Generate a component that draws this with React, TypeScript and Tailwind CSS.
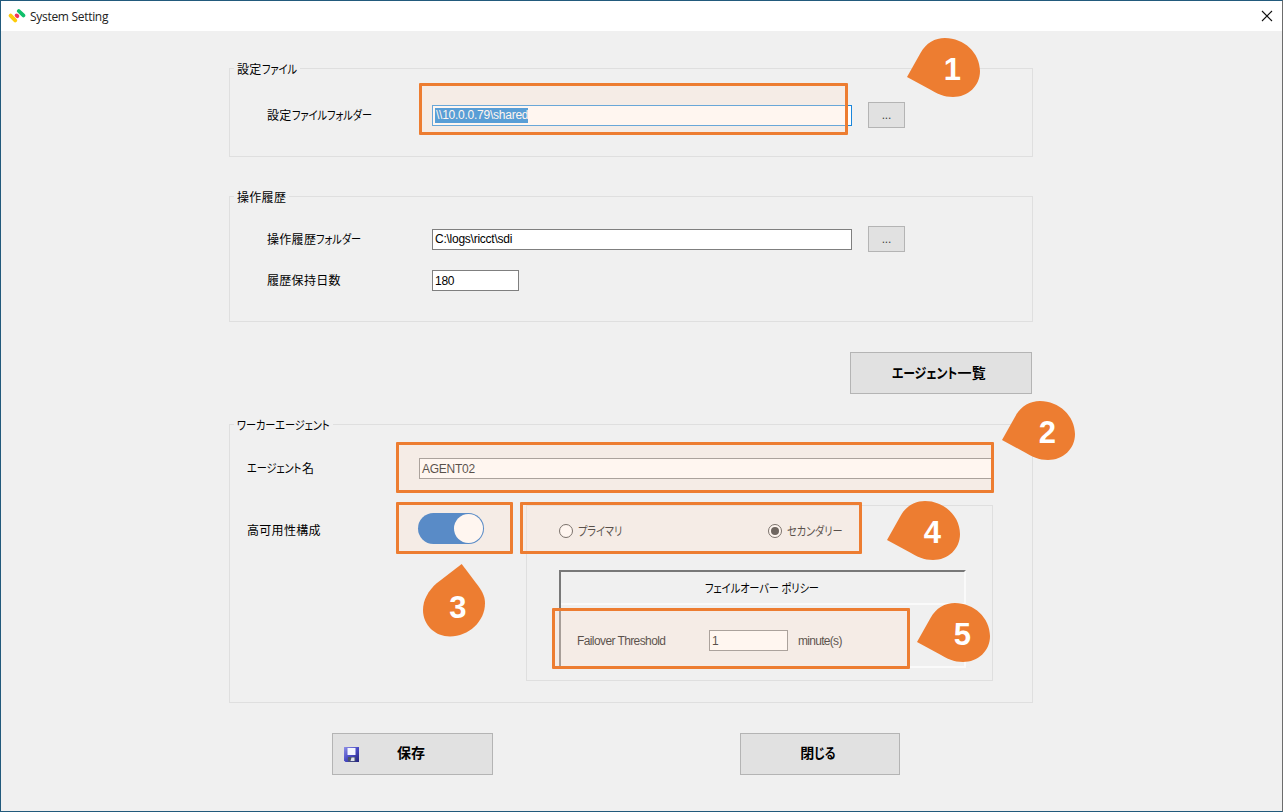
import type { ReactNode } from 'react';
import { clsx } from 'clsx';

function Logo() {
  return (
    <svg width="18" height="16" viewBox="0 0 18 16" fill="none" strokeWidth="3.8">
      <path d="M2.6 7.6 7.2 12.4" stroke="#fdcb09" strokeLinecap="round" />
      <path d="M10.8 3 15.4 7.4" stroke="#0fbf6b" strokeLinecap="round" />
      <path d="M8.6 7.4 9.4 8.2" stroke="#f0365a" strokeLinecap="round" />
    </svg>
  );
}

function FloppyIcon() {
  return (
    <svg width="15" height="15" viewBox="0 0 15 15">
      <defs>
        <linearGradient id="floppy" x1="0" y1="0" x2="1" y2="1">
          <stop offset="0" stopColor="#8f90e6" />
          <stop offset="0.5" stopColor="#4a4bc4" />
          <stop offset="1" stopColor="#23247c" />
        </linearGradient>
      </defs>
      <path d="M0 0h15v15H1.5L0 13.5Z" fill="url(#floppy)" />
      <rect x="3.5" y="1" width="8" height="7" fill="#f4f6ff" />
      <rect x="4" y="10" width="7.5" height="4.5" fill="#4b5568" />
      <path d="M7.5 10.5h3v3.5h-4Z" fill="#dfe4ee" />
    </svg>
  );
}

// condensed kana, as in MS UI Gothic
function Kana({ className = 'origin-left', children }: { className?: string; children: ReactNode }) {
  return <span className={clsx('inline-block scale-x-85 whitespace-nowrap tracking-[-0.1px]', className)}>{children}</span>;
}

function Group({ title, className, children }: { title?: ReactNode; className?: string; children: ReactNode }) {
  return (
    <section className={clsx('flex flex-col border border-[#dfdfdf]', className)}>
      {title && (
        <h2 className="-mt-[10px] ml-[4px] h-[20px] self-start bg-[#f0f0f0] pl-[3px] pr-[3px] leading-[22px]">{title}</h2>
      )}
      {children}
    </section>
  );
}

function TextBox({ className, focused, children }: { className?: string; focused?: boolean; children: ReactNode }) {
  return (
    <div
      className={clsx(
        'flex h-[21px] shrink-0 items-center border bg-white px-[2px] tracking-[-0.25px]',
        focused ? 'border-[#1a86db]' : 'border-[#7f7f7f]',
        className
      )}
    >
      {children}
    </div>
  );
}

function BrowseButton() {
  return (
    <button className="ml-4 h-[26px] w-[37px] shrink-0 border border-[#b4b4b4] bg-[#e1e1e1] text-[12px] leading-[24px] tracking-[-0.1px] text-[#444]">
      ...
    </button>
  );
}

function Radio({ checked }: { checked?: boolean }) {
  return (
    <span className="flex size-[14px] items-center justify-center rounded-full border border-[#333] bg-white">
      {checked && <span className="size-[8px] rounded-full bg-[#222]" />}
    </span>
  );
}

function Highlight({ className }: { className: string }) {
  return <div className={clsx('absolute rounded-[1px] border-3 border-[#ed7d31] bg-[#fee5d3]/35 bg-clip-padding', className)} />;
}

const sidePin =
  'M0 39 13.5 15C19 5 28 0 38 0C57 0 73 15 73 33C73 48 61 59 46 59C37 59 29.5 55.5 24 52Z';
const topPin =
  'M38.7 0 55.3 22C60.3 28.7 62 34 62 39.3C62 57.7 45.3 72.5 27 72.5C12 72.5 0 61 0 46C0 36 5.3 26.7 13.7 19.3Z';

function Pin({ n, up, className }: { n: number; up?: boolean; className: string }) {
  return (
    <svg width="73" height="73" viewBox="0 0 73 73" className={clsx('absolute', className)}>
      <path d={up ? topPin : sidePin} fill="#ed7d31" />
      <text
        x={up ? 35 : 45.5}
        y={up ? 54 : 41.5}
        textAnchor="middle"
        fill="#fff"
        className="font-['Liberation_Sans',sans-serif] text-[31px] font-bold"
      >
        {n}
      </text>
    </svg>
  );
}

export default function App() {
  return (
    <div className="relative flex h-[812px] w-[1283px] flex-col overflow-hidden border border-[#225a7c] border-r-[#6c6c6c] bg-[#f0f0f0] font-['Liberation_Sans','Noto_Sans_CJK_JP',sans-serif] text-[12px] tracking-[0.3px] text-black [font-feature-settings:'palt']">
      <header className="flex h-[30px] shrink-0 items-center bg-white pl-[7px] pr-[9px]">
        <Logo />
        <h1 className="ml-1 grow pt-px font-['Open_Sans',sans-serif] text-[12px] tracking-[-0.3px] text-[#222]">System Setting</h1>
        <svg width="12" height="12" viewBox="0 0 12 12" stroke="#111" strokeWidth="1.1">
          <path d="M1 1 11 11M11 1 1 11" />
        </svg>
      </header>

      <main className="ml-[228px] flex w-[804px] flex-col">
        <Group title={<>設定<Kana className="-mr-[6px] origin-left">ファイル</Kana></>} className="mt-[37px] h-[89px]">
          <div className="mt-[23px] flex items-center pl-[37px]">
            <span className="w-[165px] pt-px">設定<Kana>ファイルフォルダー</Kana></span>
            <TextBox focused className="w-[420px]">
              <span className="bg-[#0078d7] pl-px leading-[15px] text-white">\\10.0.0.79\shared</span>
            </TextBox>
            <BrowseButton />
          </div>
        </Group>

        <Group title="操作履歴" className="mt-[39px] h-[126px]">
          <div className="mt-[19px] flex items-center pl-[37px]">
            <span className="w-[165px] pt-px">操作履歴<Kana>フォルダー</Kana></span>
            <TextBox className="w-[420px]">C:\logs\ricct\sdi</TextBox>
            <BrowseButton />
          </div>
          <div className="mt-[18px] flex items-center pl-[37px]">
            <span className="w-[165px] pt-px">履歴保持日数</span>
            <TextBox className="w-[87px]">180</TextBox>
          </div>
        </Group>

        <button className="mr-px mt-[30px] h-[42px] w-[182px] self-end border border-[#b4b4b4] bg-[#e1e1e1] pr-1 text-[14px] font-bold">
          <Kana className="-mr-[11px] origin-left">エージェント</Kana>一覧
        </button>

        <Group title={<Kana className="-mr-[16px] origin-left">ワーカーエージェント</Kana>} className="mt-[30px] h-[279px]">
          <div className="mt-[23px] flex items-center pl-[17px]">
            <span className="w-[172px] pt-px"><Kana className="-mr-[9px] origin-left">エージェント</Kana>名</span>
            <TextBox className="w-[574px]">AGENT02</TextBox>
          </div>
          <div className="mt-[26px] flex pl-[17px]">
            <span className="mt-[17px] w-[171px]">高可用性構成</span>
            <div className="mt-[8px] flex h-[31px] w-[66px] items-center justify-end rounded-full bg-[#005bc0] pr-px">
              <span className="size-[29px] rounded-full bg-white" />
            </div>
            <Group className="ml-[42px] h-[176px] w-[467px]">
              <div className="mt-[15px] flex h-[20px] items-center pl-[32px]">
                <Radio />
                <span className="ml-[5px] w-[190px] pt-[2px]"><Kana>プライマリ</Kana></span>
                <Radio checked />
                <span className="ml-[5px] pt-[2px]"><Kana>セカンダリー</Kana></span>
              </div>
              <div className="ml-[32px] mt-[29px] flex h-[98px] w-[407px] flex-col border-2 border-b-[#fafafa] border-l-[#787878] border-r-[#fafafa] border-t-[#787878]">
                <div className="flex h-[33px] items-center justify-center border-b-2 border-[#fafafa] pr-[2px] pt-[3px]">
                  <Kana className="origin-center">フェイルオーバー ポリシー</Kana>
                </div>
                <div className="mt-[25px] flex items-center pl-[16px] tracking-[-0.6px]">
                  <span className="w-[132px]">Failover Threshold</span>
                  <TextBox className="w-[79px]">1</TextBox>
                  <span className="ml-[10px] tracking-[-0.7px]">minute(s)</span>
                </div>
              </div>
            </Group>
          </div>
        </Group>

        <div className="mt-[30px] flex justify-between pl-[103px] pr-[133px] text-[14px] font-bold">
          <button className="flex h-[42px] w-[161px] items-center border border-[#b4b4b4] bg-[#e1e1e1] pl-[11px]">
            <FloppyIcon />
            <span className="-mt-[2px] ml-[38px] tracking-[-0.1px]">保存</span>
          </button>
          <button className="h-[42px] w-[160px] border border-[#b4b4b4] bg-[#e1e1e1] pb-[2px] pr-[4px]">
            閉<Kana className="-mr-[4px] origin-left">じる</Kana>
          </button>
        </div>
      </main>

      {/* callouts over the form */}
      <Highlight className="left-[418px] top-[82px] h-[52px] w-[429px]" />
      <Highlight className="left-[395px] top-[441px] h-[51px] w-[598px]" />
      <Highlight className="left-[395px] top-[501px] h-[52px] w-[117px]" />
      <Highlight className="left-[519px] top-[501px] h-[52px] w-[342px]" />
      <Highlight className="left-[551px] top-[607px] h-[61px] w-[358px]" />
      <Pin n={1} className="left-[906px] top-[37px]" />
      <Pin n={2} className="left-[1001px] top-[400px]" />
      <Pin n={3} up className="left-[422px] top-[563px]" />
      <Pin n={4} className="left-[886px] top-[500px]" />
      <Pin n={5} className="left-[916px] top-[602px]" />
    </div>
  );
}
